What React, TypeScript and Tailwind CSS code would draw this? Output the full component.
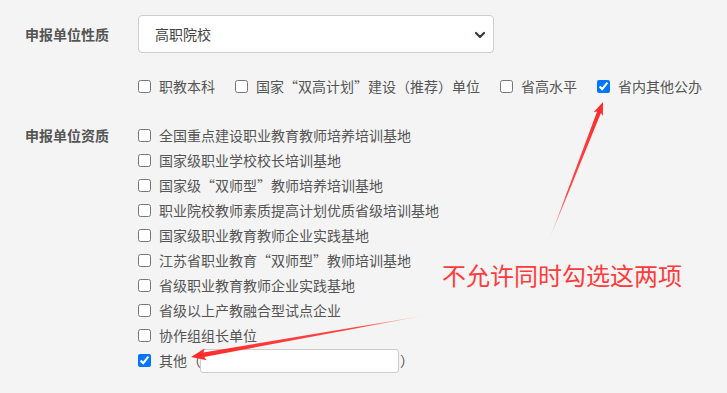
import React from "react";

type Pt = [number, number];

function arrowPoints(tail: Pt, tip: Pt, shaftW: number, headLen: number, headW: number, wingBack: number) {
  const dx = tip[0] - tail[0];
  const dy = tip[1] - tail[1];
  const len = Math.hypot(dx, dy);
  const ux = dx / len;
  const uy = dy / len;
  const nx = -uy;
  const ny = ux;
  const bx = tip[0] - ux * headLen;
  const by = tip[1] - uy * headLen;
  const wx = tip[0] - ux * (headLen + wingBack);
  const wy = tip[1] - uy * (headLen + wingBack);
  const pts: Pt[] = [
    tail,
    [bx + (nx * shaftW) / 2, by + (ny * shaftW) / 2],
    [wx + (nx * headW) / 2, wy + (ny * headW) / 2],
    tip,
    [wx - (nx * headW) / 2, wy - (ny * headW) / 2],
    [bx - (nx * shaftW) / 2, by - (ny * shaftW) / 2],
  ];
  return pts.map((p) => `${p[0].toFixed(1)},${p[1].toFixed(1)}`).join(" ");
}

function Check({ label, checked = false }: { label: React.ReactNode; checked?: boolean }) {
  return (
    <label className="flex items-center h-[25px] gap-[8px]">
      <input type="checkbox" defaultChecked={checked} className="w-[13px] h-[13px] m-0 shrink-0" />
      <span className="whitespace-nowrap">{label}</span>
    </label>
  );
}

const items = [
  "全国重点建设职业教育教师培养培训基地",
  "国家级职业学校校长培训基地",
  "国家级“双师型”教师培养培训基地",
  "职业院校教师素质提高计划优质省级培训基地",
  "国家级职业教育教师企业实践基地",
  "江苏省职业教育“双师型”教师培训基地",
  "省级职业教育教师企业实践基地",
  "省级以上产教融合型试点企业",
  "协作组组长单位",
];

export default function App() {
  const a1 = arrowPoints([548, 243], [603, 102], 4, 11, 10, 2);
  const a2 = arrowPoints([428, 315], [191, 357], 4.5, 13, 12, 2);
  return (
    <div
      className="relative w-[727px] h-[393px] overflow-hidden bg-[#f4f4f4] text-[14px] text-[#555555]"
      style={{ fontFamily: '"Noto Sans CJK SC", "Noto Sans", sans-serif' }}
    >
      {/* Row 1 */}
      <div className="flex pt-[15px]">
        <div className="w-[138px] pl-[25px] h-[38px] flex items-center font-bold text-[#555555]">申报单位性质</div>
        <div className="relative w-[356px] h-[38px] bg-white border border-[#cccccc] rounded-[4px] flex items-center pl-[16px] text-[#444444]">
          <span>高职院校</span>
          <svg className="absolute right-[7px] top-[15px]" width="12" height="8" viewBox="0 0 12 8">
            <path d="M2 2 L6 6 L10 2" fill="none" stroke="#343a40" strokeWidth="2.2" strokeLinecap="round" strokeLinejoin="round" />
          </svg>
        </div>
      </div>

      {/* Row 2 */}
      <div className="flex pl-[138px] mt-[21px] gap-[20px]">
        <Check label="职教本科" />
        <Check label="国家“双高计划”建设（推荐）单位" />
        <Check label="省高水平" />
        <Check label="省内其他公办" checked />
      </div>

      {/* Row 3 */}
      <div className="flex mt-[24px]">
        <div className="w-[138px] pl-[25px] h-[25px] flex items-center font-bold">申报单位资质</div>
        <div className="flex flex-col">
          {items.map((t) => (
            <Check key={t} label={t} />
          ))}
          <div className="flex items-center h-[25px] gap-[8px]">
            <input type="checkbox" defaultChecked className="w-[13px] h-[13px] m-0 shrink-0" />
            <span className="whitespace-nowrap">其他（</span>
            <input type="text" className="-ml-[9px] w-[199px] h-[24px] bg-white border border-[#cccccc] rounded-[3px]" />
            <span className="-ml-[7px]">）</span>
          </div>
        </div>
      </div>

      {/* Annotation */}
      <div className="absolute left-[442px] top-[259px] text-[24px] leading-[32px] text-[#ff3b3b] whitespace-nowrap">
        不允许同时勾选这两项
      </div>
      <svg className="absolute left-0 top-0 pointer-events-none" width="727" height="393">
        <defs>
          <linearGradient id="g1" gradientUnits="userSpaceOnUse" x1="548" y1="243" x2="603" y2="102">
            <stop offset="0" stopColor="#ff2a2a" stopOpacity="0" />
            <stop offset="0.35" stopColor="#ff2a2a" stopOpacity="0.85" />
            <stop offset="1" stopColor="#ff2a2a" stopOpacity="1" />
          </linearGradient>
          <linearGradient id="g2" gradientUnits="userSpaceOnUse" x1="428" y1="315" x2="191" y2="357">
            <stop offset="0" stopColor="#ff2a2a" stopOpacity="0" />
            <stop offset="0.3" stopColor="#ff2a2a" stopOpacity="0.85" />
            <stop offset="1" stopColor="#ff2a2a" stopOpacity="1" />
          </linearGradient>
        </defs>
        <polygon points={a1} fill="url(#g1)" />
        <polygon points={a2} fill="url(#g2)" />
      </svg>
    </div>
  );
}
